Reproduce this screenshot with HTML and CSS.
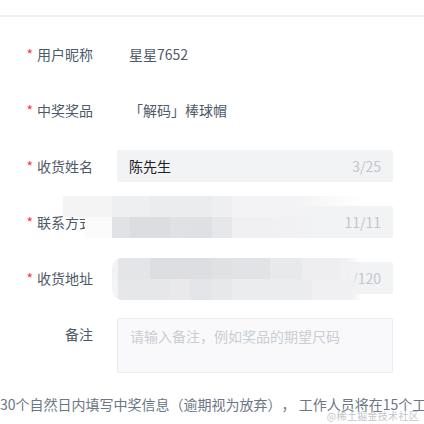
FILE: index.html
```html
<!DOCTYPE html>
<html lang="zh-CN">
<head>
    <meta charset="UTF-8">
    <meta name="viewport" content="width=device-width, initial-scale=1.0">
    <title>填写中奖信息</title>
    <link rel="stylesheet" href="styles.css">
</head>
<body>
<div class="topline"></div>
<div class="form">
    <div class="row">
        <div class="label"><span class="req">*</span>用户昵称</div>
        <div class="field plain"><span class="value">星星7652</span></div>
    </div>
    <div class="row">
        <div class="label"><span class="req">*</span>中奖奖品</div>
        <div class="field plain"><span class="value">「解码」棒球帽</span></div>
    </div>
    <div class="row">
        <div class="label"><span class="req">*</span>收货姓名</div>
        <div class="field"><span class="value">陈先生</span><span class="count">3/25</span></div>
    </div>
    <div class="row">
        <div class="label"><span class="req">*</span>联系方式</div>
        <div class="field"><span class="value"></span><span class="count">11/11</span></div>
    </div>
    <div class="row">
        <div class="label"><span class="req">*</span>收货地址</div>
        <div class="field"><span class="value"></span><span class="count">11/120</span></div>
    </div>
    <div class="row last">
        <div class="label">备注</div>
        <div class="field area"><span class="placeholder">请输入备注，例如奖品的期望尺码</span></div>
    </div>
    <div class="note">30个自然日内填写中奖信息（逾期视为放弃）， 工作人员将在15个工作日内发放奖品</div>
</div>

<!-- 打码区域 -->
<div class="mosaic phone">
    <div class="strip top"></div>
    <div class="strip bottom"></div>
</div>
<div class="mosaic address">
    <div class="strip top"></div>
    <div class="strip bottom"></div>
</div>

<div class="watermark">@稀土掘金技术社区</div>
</body>
</html>
```

FILE: styles.css
```css
body {
    margin: 0;
    padding: 0;
    overflow: hidden;
    width: 424px;
    height: 424px;
    position: relative;
    background: #fff;
    font-family: 'Noto Sans CJK SC', 'Noto Sans', sans-serif;
    font-size: 14px;
}

.topline {
    height: 2px;
    margin-top: 15px;
    background: #f0f1f5;
}

.form {
    padding-top: 21px;
}

.row {
    display: flex;
    align-items: flex-start;
    margin-bottom: 24px;
}

.row.last {
    margin-bottom: 0;
}

.label {
    width: 93px;
    padding-right: 24px;
    text-align: right;
    line-height: 32px;
    color: #4e5969;
    white-space: nowrap;
}

.req {
    color: #f53f3f;
    margin-right: 4px;
}

.field {
    width: 276px;
    height: 32px;
    box-sizing: border-box;
    padding: 0 12px;
    background: #f2f3f5;
    border-radius: 2px;
    display: flex;
    align-items: center;
    justify-content: space-between;
}

.field.plain {
    background: none;
}

.value {
    color: #1d2129;
}

.plain .value {
    color: #4e5969;
}

.count {
    color: #c2c6cc;
}

.field.area {
    height: 55px;
    align-items: flex-start;
    padding-top: 6px;
    background: #f9f9fb;
    border: 1px solid #ebecef;
    line-height: 22px;
}

.placeholder {
    color: #c9cdd4;
}

.note {
    margin-top: 20px;
    line-height: 22px;
    color: #6b7785;
    white-space: pre;
    text-spacing-trim: space-all;
}

/* 马赛克 */
.mosaic {
    position: absolute;
    filter: blur(0.6px);
}

.strip {
    height: 21px;
}

.mosaic.phone {
    left: 63px;
    top: 196px;
    width: 310px;
}

.phone .top {
    background: linear-gradient(to right,
        #f4f4f5 0 49px,
        #eeeff1 49px 87px,
        #ebecee 87px 149px,
        #eeeff1 149px 169px,
        #f3f3f5 169px 232px,
        rgba(244, 244, 246, 0) 300px);
}

.phone .bottom {
    background: linear-gradient(to right,
        rgba(255, 255, 255, 0) 0 22px,
        #fbfbfb 22px 49px,
        #e1e2e5 49px 67px,
        #dcdde0 67px 107px,
        #e0e1e4 107px 127px,
        #dfe0e3 127px 149px,
        #e6e7ea 149px 169px,
        #f0f0f2 169px 210px,
        rgba(244, 244, 246, 0) 250px);
}

.mosaic.address {
    left: 112px;
    top: 258px;
    width: 250px;
    border-radius: 10px 0 0 10px;
    overflow: hidden;
}

.address .top {
    background: linear-gradient(to right,
        #f2f2f4 0 6px,
        #e4e5e8 6px 38px,
        #dddee1 38px 100px,
        #e0e1e3 100px 120px,
        #e2e3e6 120px 158px,
        #e8e9eb 158px 190px,
        #eeeef0 190px 228px,
        #f1f1f3 228px 236px,
        rgba(242, 243, 245, 0) 248px);
}

.address .bottom {
    background: linear-gradient(to right,
        #f4f4f6 0 6px,
        #e6e7e9 6px 58px,
        #e9e9eb 58px 78px,
        #e4e5e8 78px 100px,
        #e7e8ea 100px 120px,
        #ebecee 120px 200px,
        #f0f0f2 200px 240px,
        rgba(242, 243, 245, 0) 250px);
}

.watermark {
    position: absolute;
    right: 5px;
    bottom: 1px;
    font-size: 10px;
    line-height: 14px;
    color: #c3c6cb;
    letter-spacing: 0.3px;
}
```
